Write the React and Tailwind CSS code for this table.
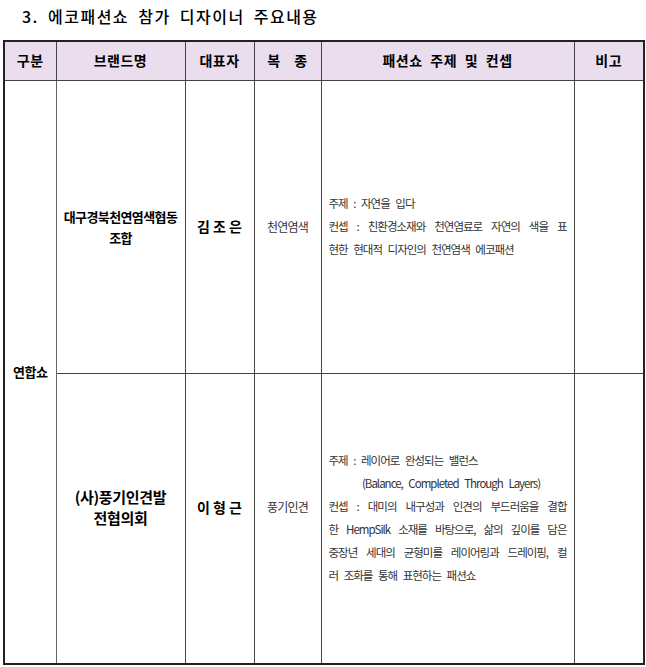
import React from 'react'

const font = { fontFamily: '"Noto Sans CJK KR", "Noto Sans", sans-serif' }

const rows = [
	{
		brand: ['대구경북천연염색협동', '조합'],
		ceo: '김 조 은',
		kind: '천연염색',
		lines: [
			['주제 : 자연을 입다', false],
			['컨셉 : 친환경소재와 천연염료로 자연의 색을 표', true],
			['현한 현대적 디자인의 천연염색 에코패션', false],
		],
	},
	{
		brand: ['(사)풍기인견발', '전협의회'],
		ceo: '이 형 근',
		kind: '풍기인견',
		lines: [
			['주제 : 레이어로 완성되는 밸런스', false],
			['\u00a0\u00a0\u00a0\u00a0\u00a0\u00a0(Balance, Completed Through Layers)', false],
			['컨셉 : 대미의 내구성과 인견의 부드러움을 결합', true],
			['한 HempSilk 소재를 바탕으로, 삶의 깊이를 담은', true],
			['중장년 세대의 균형미를 레이어링과 드레이핑, 컬', true],
			['러 조화를 통해 표현하는 패션쇼', false],
		],
		shift: true,
	},
]

export default function App() {
	return (
		<div className="bg-white w-[646px] h-[667px] overflow-hidden text-black" style={font}>
			<h1 className="pl-[22px] pt-[4px] h-[40px] text-[16px] font-medium tracking-[1.5px] [word-spacing:4px]">
				3. 에코패션쇼 참가 디자이너 주요내용
			</h1>
			<table className="ml-[3px] w-[640px] border-collapse border-2 border-[#222] table-fixed">
				<colgroup>
					<col className="w-[52px]" />
					<col className="w-[129px]" />
					<col className="w-[69px]" />
					<col className="w-[67px]" />
					<col className="w-[253px]" />
					<col className="w-[70px]" />
				</colgroup>
				<thead>
					<tr className="h-[39px] bg-[#e9ddee] text-[14px] font-bold tracking-[0.5px] [word-spacing:4px]">
						<th className="border border-[#444]">구분</th>
						<th className="border border-[#444]">브랜드명</th>
						<th className="border border-[#444]">대표자</th>
						<th className="border border-[#444] [word-spacing:10px]">복 종</th>
						<th className="border border-[#444]">패션쇼 주제 및 컨셉</th>
						<th className="border border-[#444]">비고</th>
					</tr>
				</thead>
				<tbody>
					{rows.map((r, i) => (
						<tr key={i} className={i === 0 ? 'h-[293px]' : 'h-[291px]'}>
							{i === 0 && (
								<td rowSpan={2} className="border border-[#666] text-center text-[13px] font-bold tracking-[-0.5px]">
									연합쇼
								</td>
							)}
							<td className={`border border-[#444] text-center font-bold leading-[21px] ${r.shift ? 'pb-[22px] text-[15px] tracking-[-0.3px]' : 'text-[13px] tracking-[-0.6px]'}`}>
								{r.brand.map((b) => (
									<div key={b}>{b}</div>
								))}
							</td>
							<td className={`border border-[#444] text-center text-[14px] font-bold ${r.shift ? 'pb-[22px]' : ''}`}>
								{r.ceo}
							</td>
							<td className={`border border-[#444] text-center text-[12px] text-[#333] tracking-[-0.8px] ${r.shift ? 'pb-[22px]' : ''}`}>
								{r.kind}
							</td>
							<td className="border border-[#444] pl-[7px] text-[11.5px] leading-[23px] text-[#333] tracking-[-1px] [word-spacing:4px]">
								{r.lines.map(([l, full]) => (
									<div
										key={l}
										className={full ? 'w-[238px] text-justify [text-align-last:justify] whitespace-nowrap' : 'whitespace-nowrap'}
									>
										{l}
									</div>
								))}
							</td>
							<td className="border border-[#444]"></td>
						</tr>
					))}
				</tbody>
			</table>
		</div>
	)
}
